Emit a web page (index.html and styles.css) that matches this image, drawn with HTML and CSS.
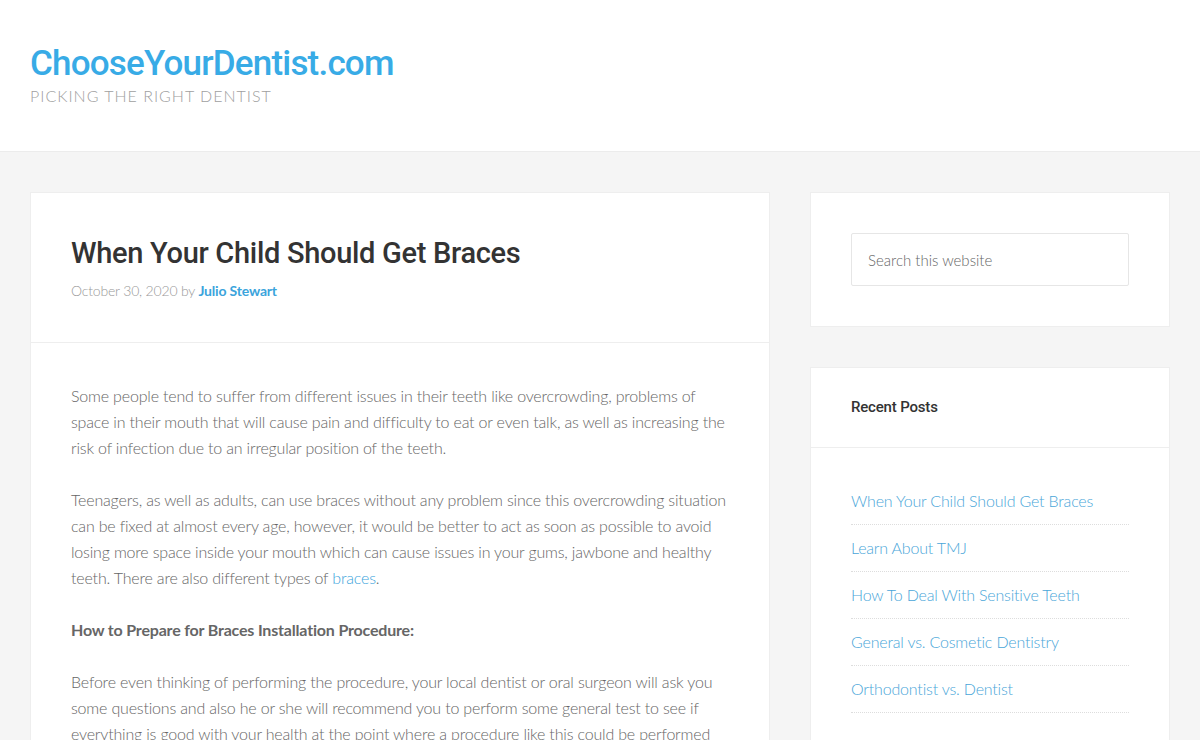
FILE: index.html
```html
<!DOCTYPE html>
<html lang="en">
<head>
<meta charset="utf-8">
<title>When Your Child Should Get Braces - ChooseYourDentist.com</title>
<link rel="stylesheet" href="styles.css">
</head>
<body>
<header class="site-header">
  <div class="wrap">
    <p class="site-title"><a href="#">ChooseYourDentist.com</a></p>
    <p class="site-description">Picking the Right Dentist</p>
  </div>
</header>
<div class="site-inner">
  <main class="content">
    <article class="entry">
      <header class="entry-header">
        <h1 class="entry-title">When Your Child Should Get Braces</h1>
        <p class="entry-meta">October 30, 2020 by <a class="author" href="#">Julio Stewart</a></p>
      </header>
      <div class="entry-content">
        <p>Some people tend to suffer from different issues in their teeth like overcrowding, problems of space in their mouth that will cause pain and difficulty to eat or even talk, as well as increasing the risk of infection due to an irregular position of the teeth.</p>
        <p>Teenagers, as well as adults, can use braces without any problem since this overcrowding situation can be fixed at almost every age, however, it would be better to act as soon as possible to avoid losing more space inside your mouth which can cause issues in your gums, jawbone and healthy teeth. There are also different types of <a href="#">braces</a>.</p>
        <p><strong>How to Prepare for Braces Installation Procedure:</strong></p>
        <p>Before even thinking of performing the procedure, your local dentist or oral surgeon will ask you some questions and also he or she will recommend you to perform some general test to see if everything is good with your health at the point where a procedure like this could be performed without any risk.</p>
      </div>
    </article>
  </main>
  <aside class="sidebar">
    <section class="widget widget-search">
      <div class="widget-body">
        <input class="search-input" type="search" placeholder="Search this website">
      </div>
    </section>
    <section class="widget widget-recent">
      <h4 class="widget-title">Recent Posts</h4>
      <div class="widget-body">
        <ul class="post-list">
          <li><a href="#">When Your Child Should Get Braces</a></li>
          <li><a href="#">Learn About TMJ</a></li>
          <li><a href="#">How To Deal With Sensitive Teeth</a></li>
          <li><a href="#">General vs. Cosmetic Dentistry</a></li>
          <li><a href="#">Orthodontist vs. Dentist</a></li>
        </ul>
      </div>
    </section>
  </aside>
</div>
</body>
</html>
```
FILE: styles.css
```css
* { box-sizing: border-box; }
html, body { margin: 0; padding: 0; }
body {
  background: #f5f5f5;
  font-family: Lato, "Open Sans", sans-serif;
  font-weight: 300;
  font-size: 16px;
  line-height: 26px;
  letter-spacing: -0.18px;
  color: #666;
}
a { color: #3ba4dc; text-decoration: none; }
p { margin: 0 0 26px; }

.site-header {
  background: #fff;
  border-bottom: 1px solid #ececec;
  height: 152px;
}
.site-header .wrap {
  max-width: 1140px;
  margin: 0 auto;
  padding-top: 41px;
}
.site-title {
  margin: 0;
  font-family: Roboto, "Noto Sans", sans-serif;
  font-weight: 500;
  font-size: 35px;
  line-height: 45px;
  letter-spacing: -0.8px;
}
.site-title a { color: #38abe6; }
.site-description {
  margin: 0;
  font-size: 16px;
  line-height: 20px;
  text-transform: uppercase;
  letter-spacing: 1px;
  color: #a0a0a0;
}

.site-inner {
  max-width: 1140px;
  margin: 0 auto;
  padding-top: 40px;
  display: flex;
  gap: 40px;
  align-items: flex-start;
}
.content { width: 740px; flex: none; }
.sidebar { width: 360px; flex: none; }

.entry {
  background: #fff;
  border: 1px solid #eee;
  border-bottom: none;
}
.entry-header {
  padding: 41px 40px 38px;
  border-bottom: 1px solid #eee;
}
.entry-title {
  margin: 0 0 6px;
  font-family: Roboto, "Noto Sans", sans-serif;
  font-weight: 500;
  font-size: 29px;
  line-height: 38px;
  letter-spacing: -0.3px;
  color: #333;
}
.entry-meta {
  margin: 0;
  font-size: 14px;
  line-height: 26px;
  color: #999;
}
.entry-meta .author { font-weight: 700; color: #3ba4dc; }
.entry-content {
  padding: 40px 40px 0;
}
.entry-content strong { font-weight: 700; }

.widget {
  background: #fff;
  border: 1px solid #eee;
  margin-bottom: 40px;
}
.widget-body { padding: 40px; }
.search-input {
  display: block;
  width: 100%;
  height: 53px;
  padding: 0 16px;
  border: 1px solid #e6e6e6;
  border-radius: 2px;
  background: #fff;
  font-family: Lato, sans-serif;
  font-weight: 300;
  font-size: 15px;
  color: #666;
  outline: none;
}
.search-input::placeholder { color: #666; }
.widget-title {
  margin: 0;
  padding: 29px 40px 30px;
  border-bottom: 1px solid #eee;
  font-family: Roboto, "Noto Sans", sans-serif;
  font-weight: 500;
  font-size: 15px;
  line-height: 20px;
  color: #333;
}
.post-list { list-style: none; margin: 0; padding: 0; }
.post-list li {
  border-bottom: 1px dotted #ddd;
  padding-bottom: 10px;
  margin-bottom: 10px;
}
.post-list a { color: #4aa6d9; }
```
